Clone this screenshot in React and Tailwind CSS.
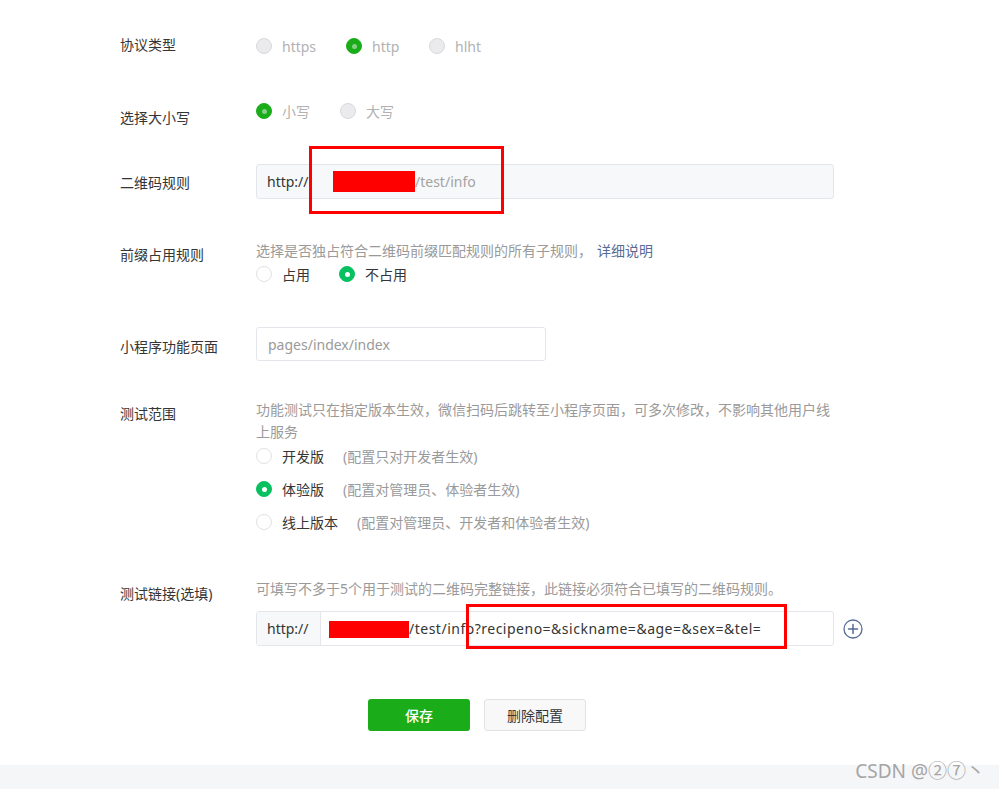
import React from 'react'

const FONT = { fontFamily: '"Noto Sans", "Noto Sans CJK SC", sans-serif' }

function Radio({ checked, muted, label, note, noteGap = 'ml-[19px]', className = '' }) {
  // muted = the grey, locked look used at the top of the form
  const dot = muted
    ? checked
      ? 'bg-[#1aad19] border-[#1aad19]'
      : 'bg-[#ebebee] border-[#d9d9dc]'
    : checked
      ? 'bg-[#07c160] border-[#07c160]'
      : 'bg-white border-[#e2e2e2]'
  return (
    <div className={`flex items-center h-[22px] ${className}`}>
      <span className={`w-4 h-4 rounded-full border flex items-center justify-center shrink-0 ${dot}`}>
        {checked && (
          <span className={`w-[5px] h-[5px] rounded-full ${muted ? 'bg-[#86d086]' : 'bg-white'}`} />
        )}
      </span>
      <span className={`ml-[10px] text-[14px] ${muted ? 'text-[#b2b2b2]' : 'text-[#353535]'}`}>{label}</span>
      {note && <span className={`${noteGap} text-[14px] text-[#9a9a9a]`}>{note}</span>}
    </div>
  )
}

function Label({ children, top }) {
  return (
    <div className={`w-[136px] shrink-0 text-[14px] leading-5 text-[#353535] ${top}`}>{children}</div>
  )
}

export default function App() {
  return (
    <div className="min-h-[789px] bg-white flex flex-col" style={FONT}>
      <div className="pl-[120px] pt-[35px] flex flex-col">
        {/* 协议类型 */}
        <div className="flex">
          <Label top="mt-0">协议类型</Label>
          <div className="flex">
            <Radio muted label="https" className="w-[90px]" />
            <Radio muted checked label="http" className="w-[83px]" />
            <Radio muted label="hlht" />
          </div>
        </div>

        {/* 选择大小写 */}
        <div className="flex mt-[43px]">
          <Label top="mt-[8px]">选择大小写</Label>
          <div className="flex">
            <Radio muted checked label="小写" className="w-[84px]" />
            <Radio muted label="大写" />
          </div>
        </div>

        {/* 二维码规则 */}
        <div className="flex mt-[36px]">
          <Label top="mt-[9px]">二维码规则</Label>
          <div className="relative">
            <div className="flex w-[578px] h-[35px] rounded-[3px] border border-[#e4e6eb] bg-[#f7f8fa] text-[14px]">
              <div className="w-[54px] pl-[10px] flex items-center border-r border-[#e4e6eb] text-[#353535]">http://</div>
              <div className="flex items-center pl-[22px]">
                <span className="w-[82px] h-[21px] bg-[#ff0000] inline-block" />
                <span className="text-[#a3a3a3]">/test/info</span>
              </div>
            </div>
            <div className="absolute left-[53px] top-[-18px] w-[195px] h-[68px] border-[3px] border-[#ff0000]" />
          </div>
        </div>

        {/* 前缀占用规则 */}
        <div className="flex mt-[42px]">
          <Label top="mt-[4px]">前缀占用规则</Label>
          <div className="flex flex-col">
            <p className="text-[14px] leading-5 text-[#9a9a9a]">
              选择是否独占符合二维码前缀匹配规则的所有子规则，
              <span className="ml-[5px] text-[#576b95]">详细说明</span>
            </p>
            <div className="flex mt-[2px]">
              <Radio label="占用" className="w-[83px]" />
              <Radio checked label="不占用" />
            </div>
          </div>
        </div>

        {/* 小程序功能页面 */}
        <div className="flex mt-[42px]">
          <Label top="mt-[10px]">小程序功能页面</Label>
          <div className="w-[290px] h-[34px] rounded-[3px] border border-[#e4e6eb] bg-white flex items-center pl-[11px] text-[14px] text-[#9a9a9a]">
            pages/index/index
          </div>
        </div>

        {/* 测试范围 */}
        <div className="flex mt-[38px]">
          <Label top="mt-[5px]">测试范围</Label>
          <div className="flex flex-col">
            <p className="w-[580px] text-[14px] leading-[22px] text-[#9a9a9a]">
              功能测试只在指定版本生效，微信扫码后跳转至小程序页面，可多次修改，不影响其他用户线上服务
            </p>
            <Radio label="开发版" note="(配置只对开发者生效)" className="mt-[2px]" />
            <Radio checked label="体验版" note="(配置对管理员、体验者生效)" className="mt-[11px]" />
            <Radio label="线上版本" note="(配置对管理员、开发者和体验者生效)" className="mt-[11px]" />
          </div>
        </div>

        {/* 测试链接(选填) */}
        <div className="flex mt-[46px]">
          <Label top="mt-[5px]">测试链接(选填)</Label>
          <div className="flex flex-col">
            <p className="text-[14px] leading-5 text-[#9a9a9a]">
              可填写不多于5个用于测试的二维码完整链接，此链接必须符合已填写的二维码规则。
            </p>
            <div className="flex items-center mt-[12px]">
              <div className="relative">
                <div className="flex w-[578px] h-[35px] rounded-[3px] border border-[#e4e6eb] bg-white text-[14px]">
                  <div className="w-[64px] pl-[10px] flex items-center border-r border-[#e4e6eb] bg-[#f7f8fa] text-[#353535]">http://</div>
                  <div className="flex items-center pl-[8px] text-[#353535]">
                    <span className="w-[80px] h-[17px] bg-[#ff0000] inline-block mt-[2px]" />
                    <span className="tracking-[0.5px]">/test/info?recipeno=&amp;sickname=&amp;age=&amp;sex=&amp;tel=</span>
                  </div>
                </div>
                <div className="absolute left-[210px] top-[-7px] w-[321px] h-[45px] border-[3px] border-[#ff0000]" />
              </div>
              <svg className="ml-[9px]" width="20" height="20" viewBox="0 0 20 20" fill="none">
                <circle cx="10" cy="10" r="9" stroke="#576b95" strokeWidth="1.3" />
                <path d="M10 5.5v9M5.5 10h9" stroke="#576b95" strokeWidth="1.5" strokeLinecap="round" />
              </svg>
            </div>
          </div>
        </div>

        {/* 按钮 */}
        <div className="flex mt-[53px] pl-[248px] gap-[14px]">
          <button className="w-[102px] h-[32px] rounded-[3px] bg-[#1aad19] text-white text-[14px] font-medium">保存</button>
          <button className="w-[102px] h-[32px] rounded-[3px] bg-[#f8f8f8] border border-[#e2e2e2] text-[#353535] text-[14px]">删除配置</button>
        </div>
      </div>

      <div className="mt-[34px] flex-1 min-h-[24px] bg-[#f5f6f8] flex justify-end items-start pr-[14px]">
        <span className="text-[19px] leading-[14px] -mt-[1px] text-[#a5a5a5]">CSDN @②⑦丶</span>
      </div>
    </div>
  )
}
